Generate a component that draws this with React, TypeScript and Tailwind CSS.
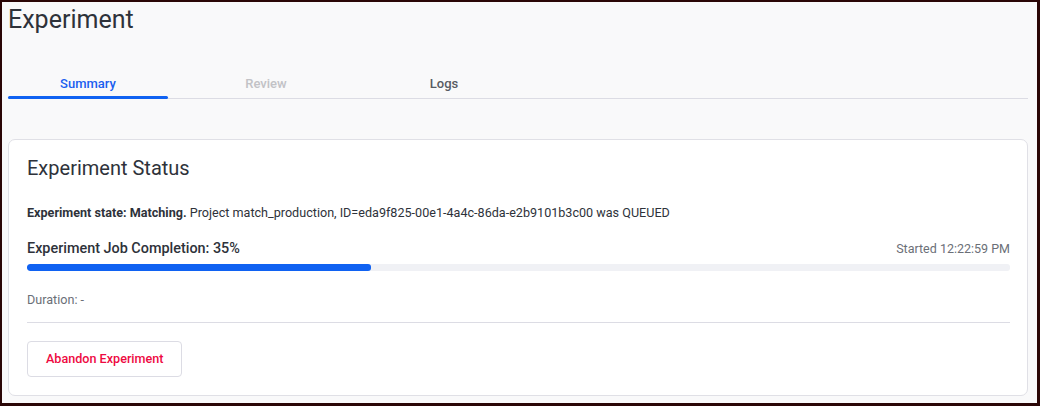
import React from "react";

export default function App() {
  return (
    <div
      className="w-[1040px] h-[406px] bg-[#2a0606] pt-[2px] pl-[2px] pr-[3px] pb-[3px]"
      style={{ fontFamily: "Roboto, 'Liberation Sans', sans-serif" }}
    >
      <div className="w-full h-full bg-[#f9f9fa] px-[6px] overflow-hidden">
        <h1 className="text-[25px] leading-[34px] text-[#2e323a] font-normal pt-[1px]">Experiment</h1>
        <div className="mt-[37px] flex gap-[18px] border-b border-[#dcdce4] mr-[3px]">
          <div className="relative w-[160px] h-[24px] flex items-start justify-center text-[13px] font-medium text-[#1a5ef0]">
            Summary
            <div className="absolute left-0 right-0 bottom-[-1px] h-[3px] rounded-full bg-[#1062f2]" />
          </div>
          <div className="w-[160px] h-[24px] flex items-start justify-center text-[13px] font-medium text-[#c2c2c6]">
            Review
          </div>
          <div className="w-[160px] h-[24px] flex items-start justify-center text-[13px] font-medium text-[#575b63]">
            Logs
          </div>
        </div>
        <div className="mt-[40px] mr-[3px] bg-white border border-[#e0e0e6] rounded-[7px] pl-[18px] pr-[17px] pt-[15px] pb-[18px]">
          <h2 className="text-[20px] leading-[26px] text-[#2e323a] font-normal">Experiment Status</h2>
          <p className="mt-[24px] text-[12.6px] leading-[16px] text-[#2e323a]">
            <span className="font-bold">Experiment state: Matching.</span> Project match_production,
            ID=eda9f825-00e1-4a4c-86da-e2b9101b3c00 was QUEUED
          </p>
          <div className="mt-[18px] flex items-end justify-between">
            <span className="text-[14.4px] leading-[20px] font-medium text-[#2e323a]">Experiment Job Completion: 35%</span>
            <span className="text-[12.5px] leading-[20px] text-[#6b6f77]">Started 12:22:59 PM</span>
          </div>
          <div className="mt-[5px] h-[7px] rounded-[3px] bg-[#f0f1f5] overflow-hidden">
            <div className="h-full bg-[#1062f2] rounded-[3px]" style={{ width: "35%" }} />
          </div>
          <p className="mt-[21px] text-[12.6px] leading-[16px] text-[#6b6f77]">Duration: -</p>
          <div className="mt-[14px] border-t border-[#dcdce4]" />
          <button className="mt-[18px] h-[36px] px-[18px] border border-[#dcdce4] rounded-[4px] text-[12.6px] font-medium text-[#ee0a42] bg-white">
            Abandon Experiment
          </button>
        </div>
      </div>
    </div>
  );
}
